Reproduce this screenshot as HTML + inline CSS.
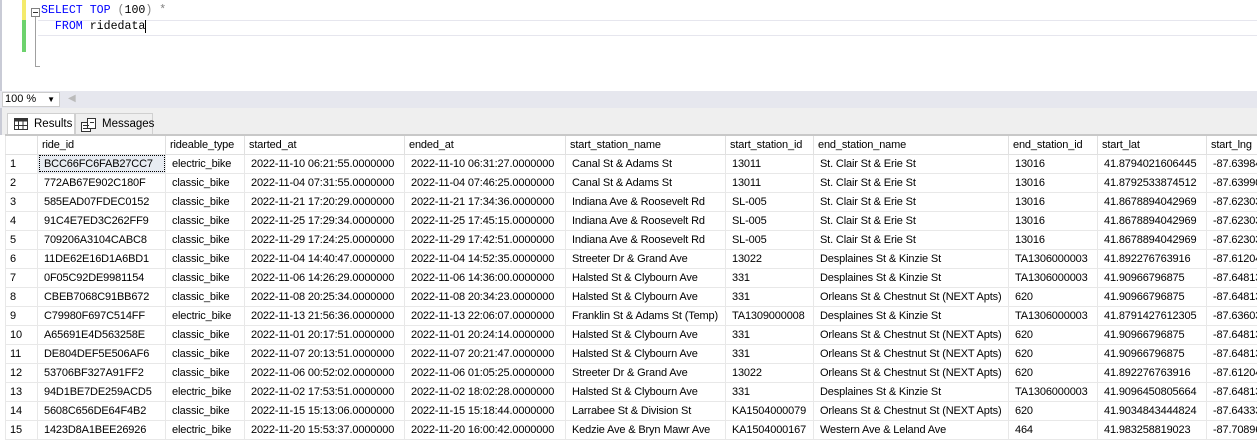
<!DOCTYPE html>
<html><head><meta charset="utf-8"><style>
*{margin:0;padding:0;box-sizing:border-box}
body{width:1257px;height:428px;overflow:hidden;background:#fff;position:relative;font-family:"Liberation Sans",sans-serif}
.ed{position:absolute;left:0;top:0;width:1257px;height:91px;background:#fff;border-left:2px solid #c9cbd6}
.y{position:absolute;left:20px;top:0;width:4px;height:20px;background:#f4ea6b}
.g{position:absolute;left:20px;top:20px;width:4px;height:32px;background:#6dd26d}
.cur{position:absolute;left:36px;top:20px;width:1221px;height:16px;border-top:1px solid #e6e6ee;border-bottom:1px solid #e6e6ee}
.code{position:absolute;left:39px;font-family:"Liberation Mono",monospace;font-size:11.6px;color:#000;white-space:pre}
.kw{color:#0000ff}.gr{color:#808080}
.fold{position:absolute;left:29px;top:8px;width:9px;height:9px;border:1px solid #808080;background:#fff}
.fold:after{content:"";position:absolute;left:1px;top:3px;width:5px;height:1px;background:#333}
.fl{position:absolute;left:33px;top:17px;width:1px;height:50px;background:#a0a0a0}
.fl2{position:absolute;left:33px;top:66px;width:5px;height:1px;background:#a0a0a0}
.zb{position:absolute;left:0;top:91px;width:1257px;height:17px;background:#e6e7ee}
.zsel{position:absolute;left:2px;top:1px;width:58px;height:15px;background:#fff;border:1px solid #ccc;font-size:11px;padding-left:2px;line-height:13px}
.tabs{position:absolute;left:0;top:108px;width:1257px;height:27px;background:#efefef;border-left:2px solid #c9cbd6}
.tab{position:absolute;top:5px;height:22px;font-size:11.5px;line-height:20px;border:1px solid #d0d0d0;border-bottom:none}
table{position:absolute;left:5px;top:134px;width:1261px;border-collapse:collapse;table-layout:fixed;font-size:11px;letter-spacing:-0.15px;color:#000}
td,th{height:19px;border:1px solid #e8e8e8;white-space:nowrap;overflow:hidden;font-weight:normal;text-align:left;padding-left:4px}
th{border-top:2px solid #c8c8c8;border-right:1px solid #e0e0e0;border-bottom:1px solid #e0e0e0}
td{padding-left:6px}
td.n{padding-left:4px}
.f{background:#e8ecf2;outline:1px dotted #000;outline-offset:-2px}
</style></head><body>
<div class="ed">
<div class="y"></div><div class="g"></div>
<div class="cur"></div>
<div class="fold"></div><div class="fl"></div><div class="fl2"></div>
<div class="code" style="top:4px"><span class="kw">SELECT TOP</span> <span class="gr">(</span>100<span class="gr">) *</span></div>
<div class="code" style="top:20px">  <span class="kw">FROM</span> ridedata<span style="border-left:1px solid #000"></span></div>
</div>
<div class="zb"><div class="zsel">100 %<span style="position:absolute;right:4px;top:0;font-size:8px">▼</span></div><span style="position:absolute;left:68px;top:2px;font-size:10px;color:#bbb">◀</span></div>
<div class="tabs">
<div class="tab" style="left:5px;width:68px;background:#fff;padding-left:26px">Results
<svg style="position:absolute;left:6px;top:4px" width="14" height="12"><rect x="0.5" y="0.5" width="13" height="11" fill="#fff" stroke="#333"/><rect x="0.5" y="0.5" width="13" height="3" fill="#333"/><line x1="4.5" y1="3" x2="4.5" y2="12" stroke="#333"/><line x1="9" y1="3" x2="9" y2="12" stroke="#333"/><line x1="0" y1="7.5" x2="14" y2="7.5" stroke="#333"/></svg></div>
<div class="tab" style="left:73px;width:78px;padding-left:26px;background:#efefef">Messages
<svg style="position:absolute;left:5px;top:4px" width="16" height="14"><rect x="0.5" y="4.5" width="9" height="9" fill="#fff" stroke="#333"/><rect x="6.5" y="0.5" width="8" height="10" fill="#fff" stroke="#333"/><line x1="2" y1="7.5" x2="8" y2="7.5" stroke="#333"/><line x1="2" y1="10.5" x2="8" y2="10.5" stroke="#333"/><line x1="9" y1="4.5" x2="13" y2="4.5" stroke="#333"/></svg></div>
</div>
<table>
<colgroup><col style="width:32px"><col style="width:128px"><col style="width:79px"><col style="width:160px"><col style="width:161px"><col style="width:160px"><col style="width:88px"><col style="width:195px"><col style="width:89px"><col style="width:109px"><col style="width:60px"></colgroup>
<tr><th></th><th>ride_id</th><th>rideable_type</th><th>started_at</th><th>ended_at</th><th>start_station_name</th><th>start_station_id</th><th>end_station_name</th><th>end_station_id</th><th>start_lat</th><th>start_lng</th></tr>
<tr><td class="n">1</td><td class="f">BCC66FC6FAB27CC7</td><td>electric_bike</td><td>2022-11-10 06:21:55.0000000</td><td>2022-11-10 06:31:27.0000000</td><td>Canal St &amp; Adams St</td><td>13011</td><td>St. Clair St &amp; Erie St</td><td>13016</td><td>41.8794021606445</td><td>-87.63984</td></tr>
<tr><td class="n">2</td><td>772AB67E902C180F</td><td>classic_bike</td><td>2022-11-04 07:31:55.0000000</td><td>2022-11-04 07:46:25.0000000</td><td>Canal St &amp; Adams St</td><td>13011</td><td>St. Clair St &amp; Erie St</td><td>13016</td><td>41.8792533874512</td><td>-87.63990</td></tr>
<tr><td class="n">3</td><td>585EAD07FDEC0152</td><td>classic_bike</td><td>2022-11-21 17:20:29.0000000</td><td>2022-11-21 17:34:36.0000000</td><td>Indiana Ave &amp; Roosevelt Rd</td><td>SL-005</td><td>St. Clair St &amp; Erie St</td><td>13016</td><td>41.8678894042969</td><td>-87.62303</td></tr>
<tr><td class="n">4</td><td>91C4E7ED3C262FF9</td><td>classic_bike</td><td>2022-11-25 17:29:34.0000000</td><td>2022-11-25 17:45:15.0000000</td><td>Indiana Ave &amp; Roosevelt Rd</td><td>SL-005</td><td>St. Clair St &amp; Erie St</td><td>13016</td><td>41.8678894042969</td><td>-87.62303</td></tr>
<tr><td class="n">5</td><td>709206A3104CABC8</td><td>classic_bike</td><td>2022-11-29 17:24:25.0000000</td><td>2022-11-29 17:42:51.0000000</td><td>Indiana Ave &amp; Roosevelt Rd</td><td>SL-005</td><td>St. Clair St &amp; Erie St</td><td>13016</td><td>41.8678894042969</td><td>-87.62303</td></tr>
<tr><td class="n">6</td><td>11DE62E16D1A6BD1</td><td>classic_bike</td><td>2022-11-04 14:40:47.0000000</td><td>2022-11-04 14:52:35.0000000</td><td>Streeter Dr &amp; Grand Ave</td><td>13022</td><td>Desplaines St &amp; Kinzie St</td><td>TA1306000003</td><td>41.892276763916</td><td>-87.61204</td></tr>
<tr><td class="n">7</td><td>0F05C92DE9981154</td><td>classic_bike</td><td>2022-11-06 14:26:29.0000000</td><td>2022-11-06 14:36:00.0000000</td><td>Halsted St &amp; Clybourn Ave</td><td>331</td><td>Desplaines St &amp; Kinzie St</td><td>TA1306000003</td><td>41.90966796875</td><td>-87.64813</td></tr>
<tr><td class="n">8</td><td>CBEB7068C91BB672</td><td>classic_bike</td><td>2022-11-08 20:25:34.0000000</td><td>2022-11-08 20:34:23.0000000</td><td>Halsted St &amp; Clybourn Ave</td><td>331</td><td>Orleans St &amp; Chestnut St (NEXT Apts)</td><td>620</td><td>41.90966796875</td><td>-87.64813</td></tr>
<tr><td class="n">9</td><td>C79980F697C514FF</td><td>electric_bike</td><td>2022-11-13 21:56:36.0000000</td><td>2022-11-13 22:06:07.0000000</td><td>Franklin St &amp; Adams St (Temp)</td><td>TA1309000008</td><td>Desplaines St &amp; Kinzie St</td><td>TA1306000003</td><td>41.8791427612305</td><td>-87.63603</td></tr>
<tr><td class="n">10</td><td>A65691E4D563258E</td><td>classic_bike</td><td>2022-11-01 20:17:51.0000000</td><td>2022-11-01 20:24:14.0000000</td><td>Halsted St &amp; Clybourn Ave</td><td>331</td><td>Orleans St &amp; Chestnut St (NEXT Apts)</td><td>620</td><td>41.90966796875</td><td>-87.64813</td></tr>
<tr><td class="n">11</td><td>DE804DEF5E506AF6</td><td>classic_bike</td><td>2022-11-07 20:13:51.0000000</td><td>2022-11-07 20:21:47.0000000</td><td>Halsted St &amp; Clybourn Ave</td><td>331</td><td>Orleans St &amp; Chestnut St (NEXT Apts)</td><td>620</td><td>41.90966796875</td><td>-87.64813</td></tr>
<tr><td class="n">12</td><td>53706BF327A91FF2</td><td>classic_bike</td><td>2022-11-06 00:52:02.0000000</td><td>2022-11-06 01:05:25.0000000</td><td>Streeter Dr &amp; Grand Ave</td><td>13022</td><td>Orleans St &amp; Chestnut St (NEXT Apts)</td><td>620</td><td>41.892276763916</td><td>-87.61204</td></tr>
<tr><td class="n">13</td><td>94D1BE7DE259ACD5</td><td>electric_bike</td><td>2022-11-02 17:53:51.0000000</td><td>2022-11-02 18:02:28.0000000</td><td>Halsted St &amp; Clybourn Ave</td><td>331</td><td>Desplaines St &amp; Kinzie St</td><td>TA1306000003</td><td>41.9096450805664</td><td>-87.64813</td></tr>
<tr><td class="n">14</td><td>5608C656DE64F4B2</td><td>classic_bike</td><td>2022-11-15 15:13:06.0000000</td><td>2022-11-15 15:18:44.0000000</td><td>Larrabee St &amp; Division St</td><td>KA1504000079</td><td>Orleans St &amp; Chestnut St (NEXT Apts)</td><td>620</td><td>41.9034843444824</td><td>-87.64333</td></tr>
<tr><td class="n">15</td><td>1423D8A1BEE26926</td><td>electric_bike</td><td>2022-11-20 15:53:37.0000000</td><td>2022-11-20 16:00:42.0000000</td><td>Kedzie Ave &amp; Bryn Mawr Ave</td><td>KA1504000167</td><td>Western Ave &amp; Leland Ave</td><td>464</td><td>41.983258819023</td><td>-87.70896</td></tr>
</table>
</body></html>
